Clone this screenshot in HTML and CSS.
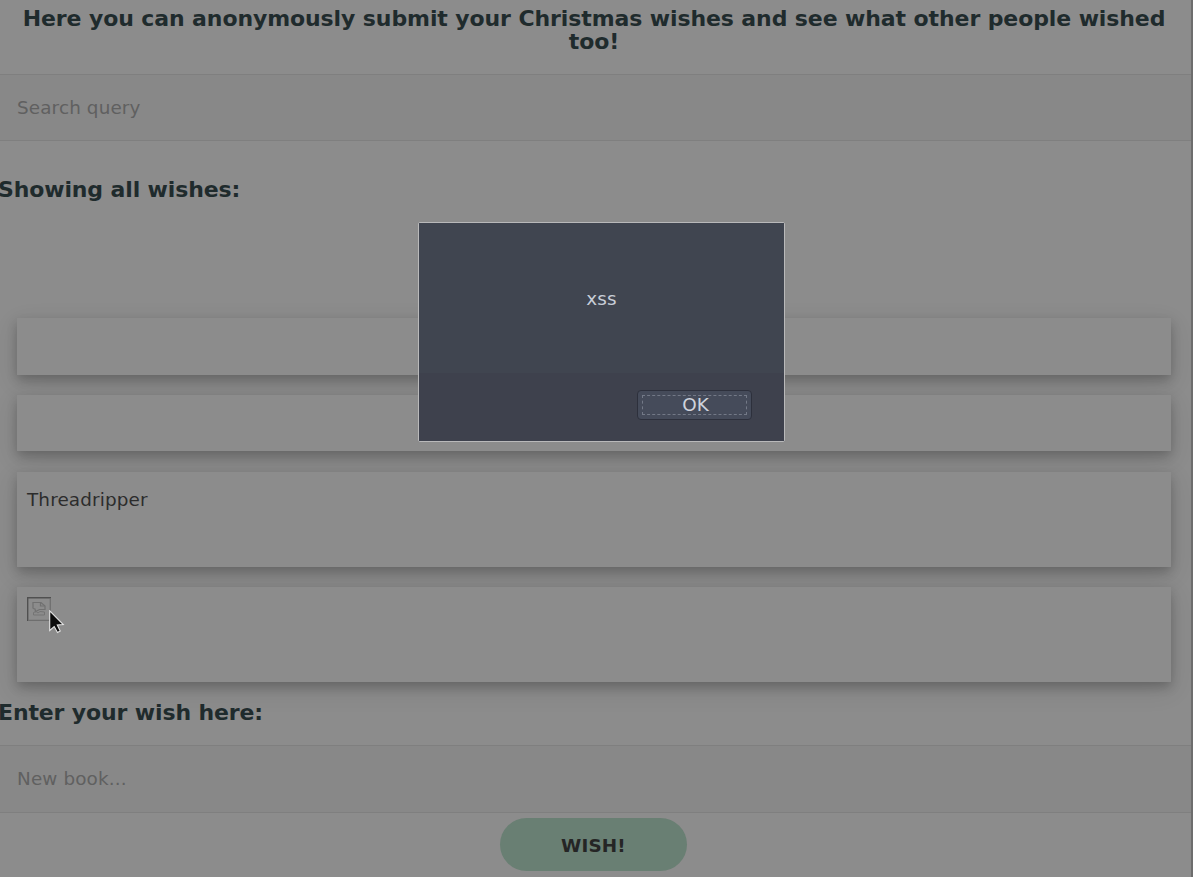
FILE: index.html
```html
<!DOCTYPE html>
<html lang="en">
<head>
<meta charset="utf-8">
<title>Christmas wishes</title>
<link rel="stylesheet" href="styles.css">
</head>
<body>
<main class="page">
  <h1 class="intro">Here you can anonymously submit your Christmas wishes and see what other people wished too!</h1>
  <input class="field search" type="text" placeholder="Search query">
  <h2 class="title title-list">Showing all wishes:</h2>
  <section class="wishes">
    <div class="wish"></div>
    <div class="wish"></div>
    <div class="wish wish-tall">Threadripper</div>
    <div class="wish wish-tall">
      <svg class="broken" width="24" height="24" viewBox="0 0 24 24" fill="none">
        <path d="M.7 24V.7H24" stroke="#505050" stroke-width="1.4"/>
        <path d="M23.3 1v22.3H1" stroke="#6e6e6e" stroke-width="1.2"/>
        <path d="M6 11.500V5.500H14L18 9V12.500H12.500L8.500 14.500L8 12L6 11.500" stroke="#707070" stroke-width="1.200"/>
        <path d="M13.500 5.500V9H17.500" stroke="#707070" stroke-width="1.200"/>
        <path d="M6.500 18V15.500L9 14.500L11 16L13 14.500L17.500 15V18Z" stroke="#747474"/>
      </svg>
    </div>
  </section>
  <h2 class="title title-form">Enter your wish here:</h2>
  <form class="form">
    <input class="field" type="text" placeholder="New book...">
    <button class="submit" type="button">WISH!</button>
  </form>
</main>
<div class="dialog" role="dialog">
  <div class="dialog-body">xss</div>
  <div class="dialog-actions"><button class="ok" type="button"><span class="ok-focus">OK</span></button></div>
</div>
<svg class="cursor" width="16" height="24" viewBox="0 0 16 24">
  <path d="M.7.800V20.500L5.200 16.500L8.500 22.500L11.200 21L8.300 15L14.300 14.500Z" fill="#0c0c0c" stroke="#e4e4e4" stroke-width="1.100"/>
</svg>
</body>
</html>
```
FILE: styles.css
```css
* { box-sizing: border-box; }
body {
  margin: 0;
  overflow: hidden;
  background: #8c8c8c;
  font-family: "DejaVu Sans", sans-serif;
  font-size: 18.4px;
  letter-spacing: .12px;
  color: #2c2c2c;
}
.page {
  display: flex;
  flex-direction: column;
  height: 877px;
  overflow: hidden;
  border-right: 2px solid #6d6d6d;
}
.intro, .title {
  margin: 0;
  font-size: 22px;
  line-height: 23px;
  letter-spacing: -.13px;
  font-weight: bold;
  color: #1f2b2d;
}
.intro {
  height: 74px;
  flex: none;
  padding: 7px 20px 0 17px;
  text-align: center;
  letter-spacing: -.1px;
}
.field {
  display: block;
  flex: none;
  width: 100%;
  height: 68px;
  margin: 0;
  padding: 0 17px 1px;
  border: 1px solid #7f7f7f;
  border-width: 1px 0;
  background: #888;
  font: inherit;
  letter-spacing: inherit;
}
.search { height: 67px; }
.field::placeholder { color: #606060; opacity: 1; }
.title-list {
  height: 177px;
  flex: none;
  padding-top: 37px;
  text-indent: -2px;
}
.wishes {
  display: grid;
  grid-template-rows: 57px 56px 95px 95px;
  row-gap: 20.300px;
  margin: 0 20px 0 17px;
}
.wish {
  padding: 10px;
  background: #8c8c8c;
  box-shadow: 0 5px 10px rgba(0,0,0,.2), 0 7px 24px rgba(0,0,0,.12);
}
.wish-tall { line-height: 36px; }
.broken { display: block; }
.title-form {
  height: 63px;
  flex: none;
  padding-top: 19px;
  text-indent: -2px;
}
.form {
  display: flex;
  flex-direction: column;
  align-items: center;
  gap: 5px;
}
.submit {
  width: 187px;
  height: 53px;
  margin-right: 4px;
  padding: 2px 0 0;
  border: 0;
  border-radius: 27px;
  background: #697f73;
  color: #252525;
  font: bold 18.400px "DejaVu Sans", sans-serif;
  letter-spacing: .12px;
}
.dialog {
  position: absolute;
  left: 418px;
  top: 222px;
  width: 367px;
  height: 220px;
  display: flex;
  flex-direction: column;
  border: 1px solid #b9b9ba;
  border-radius: 2px;
  background: #404552;
  color: #c8ced8;
}
.dialog-body {
  height: 150px;
  padding-top: 1px;
  display: flex;
  align-items: center;
  justify-content: center;
  background: #404550;
}
.dialog-actions {
  flex: 1;
  display: flex;
  justify-content: flex-end;
  padding: 17px 32px 0 0;
  background: #3e414d;
}
.ok {
  width: 115px;
  height: 30px;
  padding: 4px;
  border: 1px solid #2d303c;
  border-radius: 4px;
  background: #454b5a;
  color: #ced3dc;
  font: inherit;
}
.ok-focus {
  display: block;
  height: 20px;
  padding-left: 2px;
  line-height: 18px;
  border: 1px dashed #737987;
}
.cursor {
  position: absolute;
  left: 49px;
  top: 610px;
}
```
